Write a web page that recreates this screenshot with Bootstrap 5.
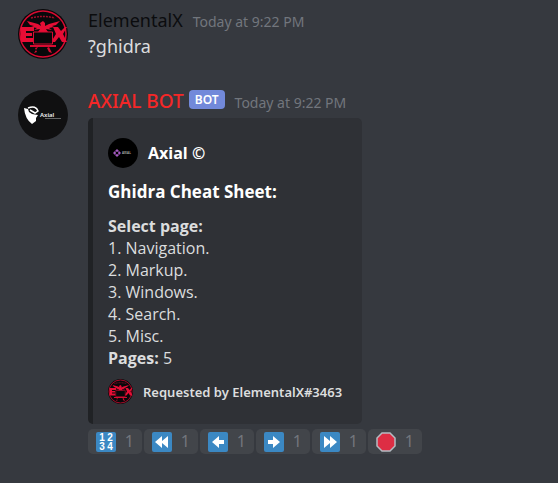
<!DOCTYPE html>
<html lang="en">
<head>
<meta charset="utf-8">
<meta name="viewport" content="width=device-width, initial-scale=1">
<title>Axial Bot</title>
<link href="https://cdn.jsdelivr.net/npm/bootstrap@5.3.0/dist/css/bootstrap.min.css" rel="stylesheet">
<style>
body { background: #36393f; color: #dcddde; font-family: "Noto Sans", "Open Sans", sans-serif; font-size: 18px; line-height: 27px; }
.chat { padding: 9px 18px; }
.message { gap: 20px; margin-bottom: 30px; }
.avatar { width: 50px; height: 50px; }
.meta { gap: 10px; line-height: 22px; }
.author { font-size: 18px; font-weight: 400; line-height: 22px; }
.author-dark { color: #0b0c0e; }
.author-red { color: #f52727; font-size: 19px; font-weight: 500; }
.stamp { font-size: 14px; color: #72767d; }
.bot-tag { background: #7289da; font-size: 12px; font-weight: 600; line-height: 19px; border-radius: 4px; padding: 0 6px; margin-left: -5px; }
.embed { background: #2f3136; border-left: 5px solid #202225; border-radius: 5px; padding: 20px 20px 20px 15px; margin-top: 4px; font-family: "Open Sans", "Noto Sans", sans-serif; }
.embed-author { gap: 10px; font-size: 16px; font-weight: 700; color: #fff; }
.embed-title { font-size: 17px; font-weight: 700; color: #fff; line-height: 24px; margin: 12px 0 11px; }
.embed-text { font-size: 16px; line-height: 22px; margin-bottom: 10px; }
.embed-footer { gap: 10px; font-family: "Noto Sans", "Open Sans", sans-serif; font-size: 13px; font-weight: 600; line-height: 20px; }
.reactions { gap: 2px; margin-top: 5px; }
.reaction { background: #42454a; border: 0; border-radius: 5px; color: #72767d; font-size: 16px; line-height: 25px; height: 25px; width: 54px; padding: 0 8px; }
.keycap { fill: #fff; font: 700 10px "Liberation Sans", Arial, sans-serif; text-anchor: middle; }
</style>
</head>
<body>
<svg class="d-none" aria-hidden="true">
  <symbol id="emblem" viewBox="0 0 50 50">
    <circle cx="25" cy="25" r="25" fill="#08080a"/>
    <circle cx="25" cy="25" r="23" fill="none" stroke="#d80b31" stroke-width="1.5"/>
    <path d="M13 9Q25 6 37 9" fill="none" stroke="#a30c29" stroke-width="1.500" stroke-dasharray="2 1"/>
    <path d="M9 12L20 15L23 17L22 14L25 12L27 14L27 17L31 15L42 12L38 16L34 17L36 18L31 19L34 21L28 20L30 23H20L22 20L16 21L19 19L13 18L16 17L12 16Z" fill="#e60d35"/>
    <path d="M3 18H16V22H8V24H14V27H8V29H15V33H3ZM35 18H40L43 22L47 18H49L45 25L49 33H44L41 28L37 33H33L38 25Z" fill="#e60d35"/>
    <path d="M15.500 23H34.500V35H15.500Z" fill="#08080a" stroke="#d80b31"/>
    <path d="M12 36H38V38H12ZM20 38L16 44L19 43L17 39ZM31 38L34 44L31 43L29 39Z" fill="#d80b31"/>
  </symbol>
  <symbol id="blue-tile" viewBox="0 0 20 20"><rect width="20" height="20" rx="2" fill="#3b88c3"/></symbol>
</svg>

<main class="chat">
  <article class="message d-flex align-items-start">
    <svg class="avatar flex-shrink-0" role="img" aria-label="ElementalX"><use href="#emblem"/></svg>
    <div>
      <header class="meta d-flex align-items-baseline">
        <h2 class="author author-dark m-0">ElementalX</h2>
        <time class="stamp">Today at 9:22 PM</time>
      </header>
      <p class="m-0">?ghidra</p>
    </div>
  </article>

  <article class="message d-flex align-items-start">
    <svg class="avatar flex-shrink-0" viewBox="0 0 50 50" role="img" aria-label="Axial Bot">
      <circle cx="25" cy="25" r="25" fill="#101011"/>
      <path d="M6 18L10 19L11 22L14 24L20 25L18 28L18 31L14 34Q7 29 6 18Z" fill="#fff"/>
      <path d="M10 18Q18 15 20 21L17 23L12 20" fill="none" stroke="#fff" stroke-width="1.500"/>
      <text x="22" y="27" font-size="6" font-weight="600" fill="#eee">Axial</text>
      <path d="M27 28.500H43" stroke="#666"/>
    </svg>
    <div>
      <header class="meta d-flex align-items-baseline">
        <h2 class="author author-red m-0">AXIAL BOT</h2>
        <span class="bot-tag align-self-start text-white">BOT</span>
        <time class="stamp">Today at 9:22 PM</time>
      </header>
      <div class="d-inline-block">
        <section class="embed">
          <div class="embed-author d-flex align-items-center">
            <svg width="30" height="30" viewBox="0 0 30 30" aria-hidden="true">
              <circle cx="15" cy="15" r="15" fill="#000"/>
              <path d="M9 11L11 13L9 14L7 13ZM9 16L11 17L9 19L7 17ZM7 13L8 15L7 17L5 15ZM11 13L13 15L11 17L10 15Z" fill="#a45ac0"/>
              <text x="14" y="16" font-size="3" font-weight="700" fill="#aaa">AXIAL</text>
            </svg>
            <span>Axial ©</span>
          </div>
          <h3 class="embed-title">Ghidra Cheat Sheet:</h3>
          <div class="embed-text">
            <div><b>Select page:</b></div>
            <div>1. Navigation.</div>
            <div>2. Markup.</div>
            <div>3. Windows.</div>
            <div>4. Search.</div>
            <div>5. Misc.</div>
            <div><b>Pages:</b> 5</div>
          </div>
          <footer class="embed-footer d-flex align-items-center">
            <svg width="25" height="25" aria-hidden="true"><use href="#emblem"/></svg>
            <span>Requested by ElementalX#3463</span>
          </footer>
        </section>
      </div>
      <div class="reactions d-flex flex-wrap">
        <button type="button" class="reaction d-flex align-items-center justify-content-between" aria-label="Numbers, 1">
          <svg class="overflow-visible" width="20" height="20" viewBox="0 0 20 20"><use href="#blue-tile"/><g class="keycap"><text x="6" y="9">1</text><text x="14" y="9">2</text><text x="6" y="18">3</text><text x="14" y="18">4</text></g></svg><span>1</span>
        </button>
        <button type="button" class="reaction d-flex align-items-center justify-content-between" aria-label="First page, 1">
          <svg width="20" height="20" viewBox="0 0 20 20"><use href="#blue-tile"/><path d="M10 4V9L16 4V16L10 11V16L3 10Z" fill="#fff"/></svg><span>1</span>
        </button>
        <button type="button" class="reaction d-flex align-items-center justify-content-between" aria-label="Previous page, 1">
          <svg width="20" height="20" viewBox="0 0 20 20"><use href="#blue-tile"/><path d="M4 10L11 4V8H16V12H11V16Z" fill="#fff"/></svg><span>1</span>
        </button>
        <button type="button" class="reaction d-flex align-items-center justify-content-between" aria-label="Next page, 1">
          <svg width="20" height="20" viewBox="0 0 20 20"><use href="#blue-tile"/><path d="M16 10L9 4V8H4V12H9V16Z" fill="#fff"/></svg><span>1</span>
        </button>
        <button type="button" class="reaction d-flex align-items-center justify-content-between" aria-label="Last page, 1">
          <svg width="20" height="20" viewBox="0 0 20 20"><use href="#blue-tile"/><path d="M10 4V9L4 4V16L10 11V16L17 10Z" fill="#fff"/></svg><span>1</span>
        </button>
        <button type="button" class="reaction d-flex align-items-center justify-content-between" aria-label="Stop, 1">
          <svg width="20" height="20" viewBox="0 0 20 20"><path d="M6 1H14L19 6V14L14 19H6L1 14V6Z" fill="#dd2e44" stroke="#b5bcc2" stroke-width="1.5"/></svg><span>1</span>
        </button>
      </div>
    </div>
  </article>
</main>
<script src="https://cdn.jsdelivr.net/npm/bootstrap@5.3.0/dist/js/bootstrap.bundle.min.js"></script>
</body>
</html>
